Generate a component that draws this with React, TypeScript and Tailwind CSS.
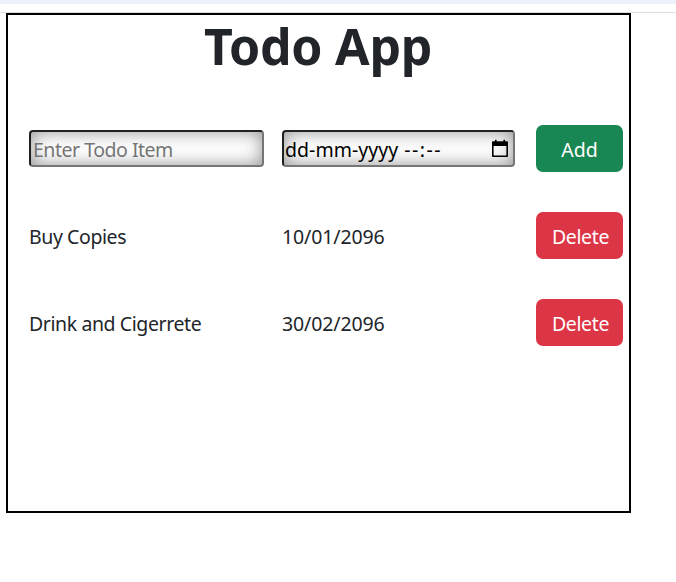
const todos = [
  { name: "Buy Copies", date: "10/01/2096" },
  { name: "Drink and Cigerrete", date: "30/02/2096" },
];

const field =
  "flex h-[37px] items-center rounded-[4px] border-2 border-t-[#1f2222] border-l-[#1f2222] border-r-[#767676] border-b-[#767676] bg-white shadow-[inset_0_0_18px_rgba(0,0,0,0.43)]";
const button = "flex h-[47px] w-[87px] items-center justify-center rounded-[7px] pt-[2px] text-white";
const row = "grid h-[87px] grid-cols-[253px_254px_87px] items-center pl-[21px]";

export default function App() {
  return (
    <div className="h-[582px] w-full overflow-hidden bg-white font-['Noto_Sans',sans-serif] text-[19.5px] leading-[30px] text-[#212529]">
      <div className="h-1 bg-[#ebf2fa]" />
      <div className="h-2" />
      <div className="h-px bg-[#e0e0e0]" />
      <main className="ml-1.5 h-[500px] w-[625px] border-2 border-black">
        <h1 className="h-[90px] pt-px pr-px text-center text-[50px] leading-[60px] font-bold tracking-[-0.25px]">
          Todo App
        </h1>
        <div className={row}>
          <input
            className={`${field} w-[235px] px-[2px] pt-[2px] tracking-[-0.48px] text-black outline-none placeholder:text-[#757575]`}
            placeholder="Enter Todo Item"
          />
          <div className={`${field} w-[233px] justify-between pl-px pr-[4px] text-black`}>
            <div className="flex pt-[2px]">
              <span className="tracking-[0.05px]">dd-mm-yyyy</span>
              <span className="pl-[6px] tracking-[1.5px]">--:--</span>
            </div>
            <svg width="18" height="20" viewBox="0 0 18 20" fill="none">
              <path d="M1.8 3.2h14.4v14.1H1.8z" stroke="#000" strokeWidth="1.6" strokeLinejoin="round" />
              <path d="M1.2 2.5h15.6v4.5H1.2zM4 .8h1.6v3H4zM12.4.8H14v3h-1.6z" fill="#000" />
            </svg>
          </div>
          <button className={`${button} bg-[#198754]`}>Add</button>
        </div>
        {todos.map((todo) => (
          <div key={todo.name} className={row}>
            <span className="pt-[2px] tracking-[-0.41px]">{todo.name}</span>
            <span className="pt-[2px] tracking-[-0.12px]">{todo.date}</span>
            <button className={`${button} bg-[#dc3545] pl-[2px] tracking-[-0.35px]`}>Delete</button>
          </div>
        ))}
      </main>
    </div>
  );
}
